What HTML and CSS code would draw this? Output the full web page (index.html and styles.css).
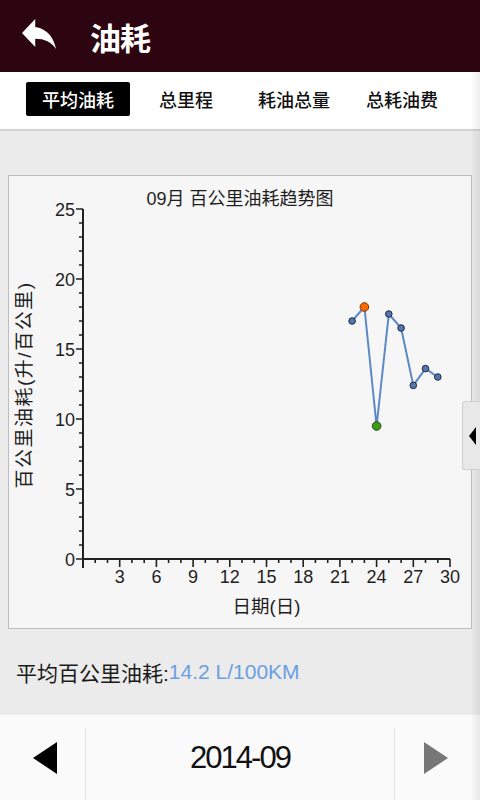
FILE: index.html
```html
<!DOCTYPE html>
<html lang="zh-CN">
<head>
<meta charset="utf-8">
<title>油耗</title>
<link rel="stylesheet" href="styles.css">
</head>
<body>
<div class="app">
  <header class="topbar">
    <svg class="back" viewBox="3 5 18 15" preserveAspectRatio="none" aria-hidden="true">
      <path d="M10 9V5l-7 7 7 7v-4.1c5 0 8.5 1.6 11 5.1-1-5-4-10-11-11z" fill="#fff"/>
    </svg>
    <h1 class="title">油耗</h1>
  </header>

  <nav class="tabs">
    <span class="tab active">平均油耗</span>
    <span class="tab">总里程</span>
    <span class="tab">耗油总量</span>
    <span class="tab">总耗油费</span>
  </nav>

  <main class="content">
    <section class="chart-card">
      <svg class="chart" viewBox="8 175 464 454" width="464" height="454">
        <text class="chart-title" x="240" y="205" text-anchor="middle">09月 百公里油耗趋势图</text>
        <text class="axis-title y-title" transform="translate(24 385) rotate(-90)" text-anchor="middle" dominant-baseline="central">百公里油耗(升/百公里)</text>
        <text class="axis-title" x="266.5" y="613" text-anchor="middle">日期(日)</text>

        <!-- y axis -->
        <path class="axis" d="M83 209V568M83 559H450"/>
        <path class="tick" d="M79 545h4M79 531h4M79 517h4M79 503h4M79 475h4M79 461h4M79 447h4M79 433h4M79 405h4M79 391h4M79 377h4M79 363h4M79 335h4M79 321h4M79 307h4M79 293h4M79 265h4M79 251h4M79 237h4M79 223h4"/>
        <path class="tick major" d="M76 559h7M76 489h7M76 419h7M76 349h7M76 279h7M76 209h7"/>
        <g class="num" text-anchor="end">
          <text x="75" y="565.5">0</text>
          <text x="75" y="495.5">5</text>
          <text x="75" y="425.5">10</text>
          <text x="75" y="355.5">15</text>
          <text x="75" y="285.5">20</text>
          <text x="75" y="215.5">25</text>
        </g>

        <!-- x axis -->
        <path class="tick" d="M95.2 559v4M107.5 559v4M131.9 559v4M144.2 559v4M168.6 559v4M180.9 559v4M205.3 559v4M217.6 559v4M242 559v4M254.3 559v4M278.7 559v4M291 559v4M315.4 559v4M327.7 559v4M352.1 559v4M364.4 559v4M388.8 559v4M401.1 559v4M425.5 559v4M437.8 559v4"/>
        <path class="tick major" d="M119.7 559v8M156.4 559v8M193.1 559v8M229.8 559v8M266.5 559v8M303.2 559v8M339.9 559v8M376.6 559v8M413.3 559v8M450 559v8"/>
        <g class="num" text-anchor="middle">
          <text x="119.7" y="583">3</text>
          <text x="156.4" y="583">6</text>
          <text x="193.1" y="583">9</text>
          <text x="229.8" y="583">12</text>
          <text x="266.5" y="583">15</text>
          <text x="303.2" y="583">18</text>
          <text x="339.9" y="583">21</text>
          <text x="376.6" y="583">24</text>
          <text x="413.3" y="583">27</text>
          <text x="450" y="583">30</text>
        </g>

        <!-- data -->
        <polyline class="line" points="352.1,321 364.4,307 376.6,426 388.8,314 401.1,328 413.3,385.4 425.5,368.6 437.8,377"/>
        <circle class="dot" cx="352.1" cy="321" r="3.3"/>
        <circle class="dot max" cx="364.4" cy="307" r="4.3"/>
        <circle class="dot min" cx="376.6" cy="426" r="4.3"/>
        <circle class="dot" cx="388.8" cy="314" r="3.3"/>
        <circle class="dot" cx="401.1" cy="328" r="3.3"/>
        <circle class="dot" cx="413.3" cy="385.4" r="3.3"/>
        <circle class="dot" cx="425.5" cy="368.6" r="3.3"/>
        <circle class="dot" cx="437.8" cy="377" r="3.3"/>
      </svg>
    </section>
    <p class="summary">平均百公里油耗:<span class="value">14.2 L/100KM</span></p>
  </main>

  <footer class="month-bar">
    <div class="nav-btn"><span class="tri left"></span></div>
    <div class="month">2014-09</div>
    <div class="nav-btn"><span class="tri right"></span></div>
  </footer>

  <div class="side-tab"><span class="tri small"></span></div>
  <div class="edge-shade"></div>
</div>
</body>
</html>
```

FILE: styles.css
```css
* { box-sizing: border-box; }

html, body {
  margin: 0;
  padding: 0;
}

body {
  font-family: "Liberation Sans", "Noto Sans CJK SC", sans-serif;
  background: #ebebeb;
  color: #111;
}

.app {
  position: relative;
  width: 480px;
  height: 800px;
  display: flex;
  flex-direction: column;
  overflow: hidden;
}

/* Top bar */
.topbar {
  height: 72px;
  flex: none;
  background: #2d0511;
  display: flex;
  align-items: center;
  padding-left: 22px;
}

.back {
  width: 34px;
  height: 30px;
  margin-top: -5px;
}

.title {
  margin: 0 0 0 34px;
  font-family: "Noto Sans CJK SC", sans-serif;
  font-size: 31px;
  font-weight: 700;
  color: #fff;
  line-height: 1;
  letter-spacing: -1px;
}

/* Tabs */
.tabs {
  height: 59px;
  flex: none;
  background: #fff;
  border-bottom: 2px solid #d3d3d3;
  display: grid;
  grid-template-columns: repeat(4, 108px);
  padding-left: 24px;
  align-items: center;
}

.tab {
  justify-self: center;
  font-family: "Noto Sans CJK SC", sans-serif;
  font-size: 18px;
  font-weight: 500;
  color: #111;
  line-height: 34px;
  height: 34px;
  padding: 0 16px;
  margin-top: -3px;
  border-radius: 2px;
}

.tab.active {
  background: #000;
  color: #fff;
}

/* Content */
.content {
  flex: 1;
  display: flex;
  flex-direction: column;
  padding: 44px 8px 0;
}

.chart-card {
  height: 454px;
  flex: none;
  background: #f6f6f6;
  border: 1px solid #bdbdbd;
  overflow: hidden;
}

.chart {
  display: block;
  margin: -1px;
}

.chart-title,
.axis-title {
  font-family: "Liberation Sans", "Noto Sans CJK SC", sans-serif;
  font-size: 18px;
  fill: #1e1e1e;
}

.axis-title {
  font-size: 18.5px;
}

.y-title {
  font-size: 19px;
  letter-spacing: 1.5px;
}

.num text {
  font-family: "Liberation Sans", sans-serif;
  font-size: 18px;
  fill: #1e1e1e;
}

.axis {
  stroke: #222;
  stroke-width: 2;
  fill: none;
}

.tick {
  stroke: #222;
  stroke-width: 1.6;
  fill: none;
}

.line {
  fill: none;
  stroke: #5d88c6;
  stroke-width: 2;
  stroke-linejoin: round;
}

.dot {
  fill: #5677ad;
  stroke: #1d2a44;
  stroke-width: 1;
}

.dot.max { fill: #ff6a00; stroke: #7a3300; }
.dot.min { fill: #3f9a16; stroke: #1c4a08; }

.summary {
  flex: 1;
  margin: 0;
  display: flex;
  align-items: center;
  padding-left: 8px;
  padding-bottom: 1px;
  font-family: "Liberation Sans", "Noto Sans CJK SC", sans-serif;
  font-size: 21px;
  color: #1a1a1a;
}

.summary .value {
  color: #6b9fe2;
}

/* Footer month switcher */
.month-bar {
  height: 85px;
  flex: none;
  background: #fafafa;
  display: grid;
  grid-template-columns: 85px 1fr 85px;
  padding-top: 13px;
}

.nav-btn {
  display: flex;
  align-items: center;
  justify-content: center;
  margin-top: -13px;
}

.month {
  border-left: 1px solid #e3e3e3;
  border-right: 1px solid #e3e3e3;
  display: flex;
  align-items: center;
  justify-content: center;
  padding-bottom: 12px;
  font-family: "Liberation Sans", sans-serif;
  font-size: 31px;
  letter-spacing: -2px;
  color: #111;
}

.tri {
  width: 0;
  height: 0;
  border-top: 16px solid transparent;
  border-bottom: 16px solid transparent;
}

.tri.left {
  border-right: 24px solid #000;
  margin-left: 5px;
}

.tri.right {
  border-left: 24px solid #777;
  margin-left: -4px;
}

/* Side drawer handle (overlay) */
.side-tab {
  position: absolute;
  top: 401px;
  right: 0;
  width: 18px;
  height: 69px;
  background: #e8e8e8;
  border: 1px solid #cfcfcf;
  border-right: none;
  border-radius: 3px 0 0 3px;
  display: flex;
  align-items: center;
  justify-content: center;
  z-index: 2;
}

.tri.small {
  border-top: 9px solid transparent;
  border-bottom: 9px solid transparent;
  border-right: 7px solid #000;
  margin-left: 2px;
}

.edge-shade {
  position: absolute;
  top: 72px;
  right: 0;
  bottom: 0;
  width: 8px;
  background: linear-gradient(to right, rgba(0,0,0,0.015), rgba(0,0,0,0.07));
  z-index: 1;
  pointer-events: none;
}
```
